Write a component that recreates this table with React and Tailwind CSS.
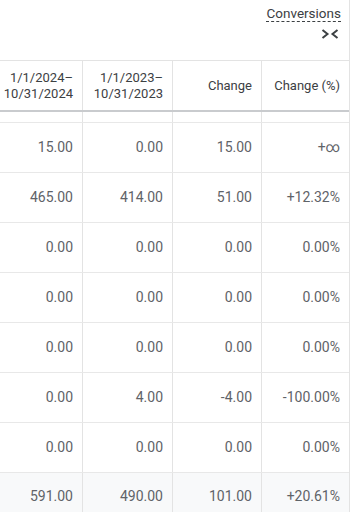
import React from "react";

const rows = [
  ["15.00", "0.00", "15.00", "+∞"],
  ["465.00", "414.00", "51.00", "+12.32%"],
  ["0.00", "0.00", "0.00", "0.00%"],
  ["0.00", "0.00", "0.00", "0.00%"],
  ["0.00", "0.00", "0.00", "0.00%"],
  ["0.00", "4.00", "-4.00", "-100.00%"],
  ["0.00", "0.00", "0.00", "0.00%"],
];

const total = ["591.00", "490.00", "101.00", "+20.61%"];

const cols = "grid grid-cols-[83px_90px_89px_88px]";

function Cell({ children, className = "" }) {
  return (
    <div className={`border-r border-[#e3e3e3] flex items-center justify-end pr-[9px] ${className}`}>
      {children}
    </div>
  );
}

export default function App() {
  return (
    <div className="w-[351px] h-[512px] overflow-hidden bg-white font-['Roboto',sans-serif]">
      <div className="w-[350px] border-r border-[#e3e3e3]">
        {/* column chooser */}
        <div className="h-[60px] flex flex-col items-end pr-[8px] pt-[5px]">
          <span className="text-[13.5px] leading-[16px] text-[#3c4043] border-b border-dashed border-[#3c4043]">
            Conversions
          </span>
          <svg width="18" height="12" viewBox="0 0 18 12" className="mt-[6px] mr-[2px]" fill="none" stroke="#3c4043" strokeWidth="2">
            <path d="M1.5 2l5 4-5 4" />
            <path d="M16.5 2l-5 4 5 4" />
          </svg>
        </div>

        {/* header */}
        <div className={`${cols} h-[52px] border-t border-[#e3e3e3] border-b-2 border-b-[#c9cbce] text-[13px] leading-[16px] text-[#3c4043] text-right`}>
          <Cell>
            <span>1/1/2024–<br />10/31/2024</span>
          </Cell>
          <Cell>
            <span>1/1/2023–<br />10/31/2023</span>
          </Cell>
          <Cell>Change</Cell>
          <Cell>Change (%)</Cell>
        </div>

        {/* spacer row */}
        <div className={`${cols} h-[11px] border-b border-[#e8e8e8]`}>
          <Cell />
          <Cell />
          <Cell />
          <Cell />
        </div>

        {/* data rows */}
        {rows.map((r, i) => (
          <div key={i} className={`${cols} h-[50px] border-b border-[#e8e8e8] text-[14px] text-[#5f6368]`}>
            {r.map((v, j) => (
              <Cell key={j}>{v}</Cell>
            ))}
          </div>
        ))}

        {/* total */}
        <div className={`${cols} h-[50px] bg-[#f8f9fa] text-[14px] text-[#5f6368]`}>
          {total.map((v, j) => (
            <Cell key={j} className="pb-[3px]">{v}</Cell>
          ))}
        </div>
      </div>
    </div>
  );
}
